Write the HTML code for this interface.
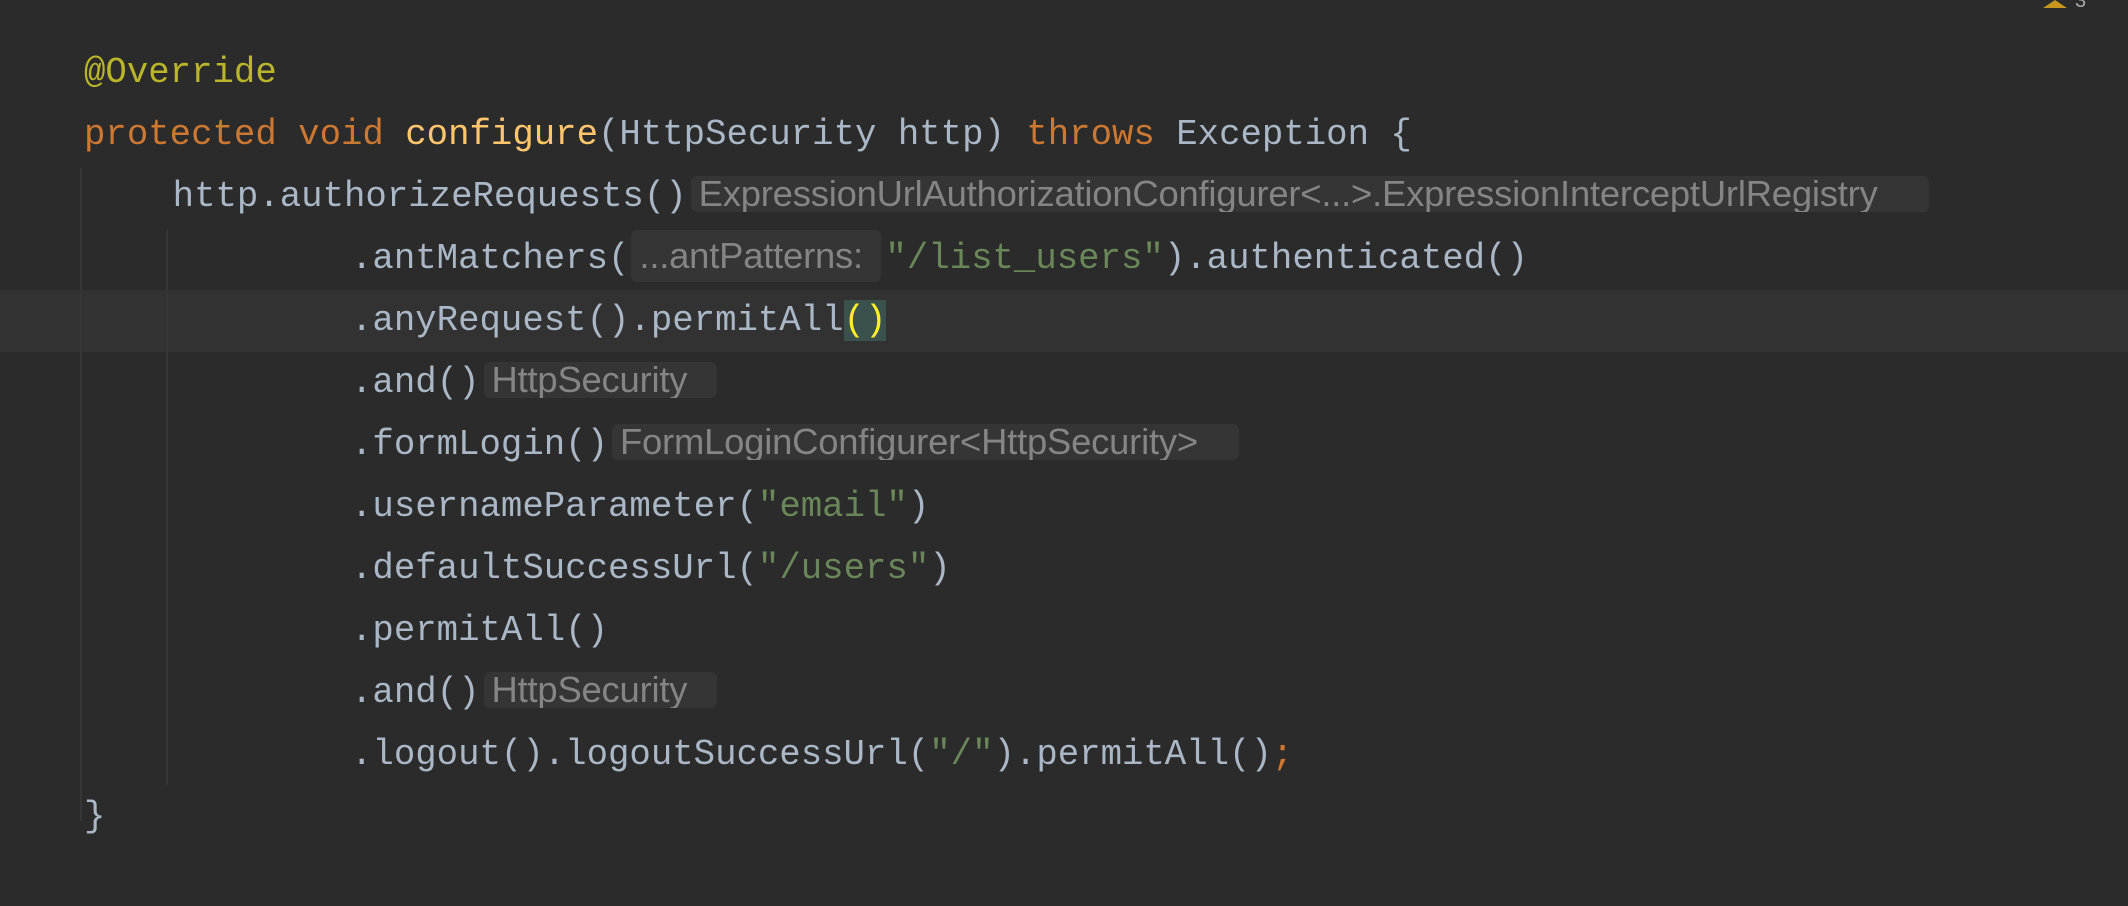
<!DOCTYPE html>
<html><head><meta charset="utf-8"><style>
body{margin:0;width:2128px;height:906px;background:#2b2b2b;overflow:hidden;position:relative;font-family:"Liberation Mono",monospace;font-size:35.7px;color:#a9b7c6}
.l{position:absolute;left:84px;height:62px;line-height:62px;white-space:pre}
.i1{left:87px}.i2{left:94px}
.k{color:#cc7832}.a{color:#bbb529}.f{color:#ffc66d}.s{color:#6a8759}
.h{display:inline-block;vertical-align:middle;background:#353535;color:#858585;font-family:"Liberation Sans",sans-serif;font-size:36.4px;letter-spacing:-0.2px;height:36px;line-height:36px;border-radius:6px;padding:0 8px;margin:0 4px;overflow:hidden;box-sizing:border-box;position:relative;top:-3px}
.g{position:absolute;width:2px;background:#363636}
</style></head><body>
<div style="position:absolute;left:0;top:290px;width:2128px;height:62px;background:#323232"></div>
<div class="g" style="left:80px;top:168px;height:653px"></div>
<div class="g" style="left:166px;top:230px;height:555px"></div>
<div style="position:absolute;left:2043px;top:0;width:0;height:0;border-left:12px solid transparent;border-right:12px solid transparent;border-bottom:8px solid #c6961d"></div>
<div style="position:absolute;left:2075px;top:-10px;font-family:'Liberation Sans',sans-serif;font-size:20px;color:#aaa">3</div>
<div class="l" style="top:42px"><span class="a">@Override</span></div>
<div class="l" style="top:104px"><span class="k">protected void </span><span class="f">configure</span>(HttpSecurity http) <span class="k">throws </span>Exception {</div>
<div class="l i1" style="top:166px">    http.authorizeRequests()<span class="h" style="width:1238px">ExpressionUrlAuthorizationConfigurer&lt;...&gt;.ExpressionInterceptUrlRegistry</span></div>
<div class="l i2" style="top:228px">            .antMatchers(<span class="h" style="width:250px;height:52px;line-height:52px;margin:0 4px 0 2px">...antPatterns:</span><span class="s">"/list_users"</span>).authenticated()</div>
<div class="l i2" style="top:290px">            .anyRequest().permitAll<span style="background:#3b514d;color:#ffef28">()</span></div>
<div class="l i2" style="top:352px">            .and()<span class="h" style="width:233px">HttpSecurity</span></div>
<div class="l i2" style="top:414px">            .formLogin()<span class="h" style="width:627px">FormLoginConfigurer&lt;HttpSecurity&gt;</span></div>
<div class="l i2" style="top:476px">            .usernameParameter(<span class="s">"email"</span>)</div>
<div class="l i2" style="top:538px">            .defaultSuccessUrl(<span class="s">"/users"</span>)</div>
<div class="l i2" style="top:600px">            .permitAll()</div>
<div class="l i2" style="top:662px">            .and()<span class="h" style="width:233px">HttpSecurity</span></div>
<div class="l i2" style="top:724px">            .logout().logoutSuccessUrl(<span class="s">"/"</span>).permitAll()<span class="k">;</span></div>
<div class="l" style="top:786px">}</div>
</body></html>
